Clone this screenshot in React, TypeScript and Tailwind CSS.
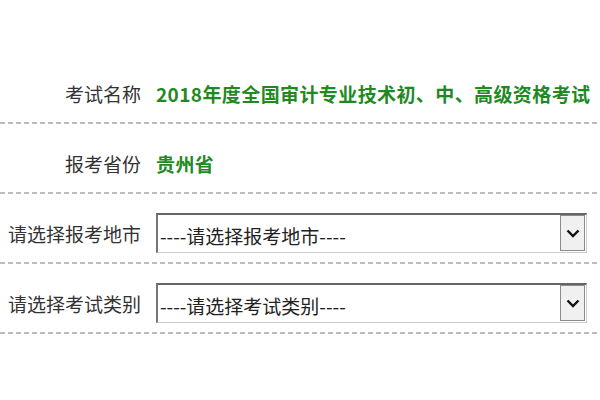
import React from "react";

const font = { fontFamily: '"Noto Sans CJK SC", "Noto Sans", sans-serif' };

function Divider() {
  return (
    <div className="h-[2px] w-[598px] bg-[repeating-linear-gradient(to_right,#bdbdbd_0px,#bdbdbd_5px,transparent_5px,transparent_8px)]" />
  );
}

function Row({ label, children }: { label: string; children: React.ReactNode }) {
  return (
    <div className="flex h-[68px] items-center pt-[10px]">
      <div className="w-[141px] shrink-0 text-right text-[19px] leading-none text-[#333]">{label}</div>
      <div className="ml-[15px] flex items-center">{children}</div>
    </div>
  );
}

function FakeSelect({ text }: { text: string }) {
  return (
    <div className="relative flex h-[40px] w-[431px] items-center border-t-2 border-l-2 border-r border-b border-t-[#666] border-l-[#777] border-r-[#ccc] border-b-[#ccc] bg-white pl-[2px]">
      <span className="pt-[3px] text-[19px] leading-none text-[#222]">{text}</span>
      <div className="absolute right-[1px] top-[0px] flex h-[36px] w-[25px] items-center justify-center border border-[#8a8a8a] bg-[#f0f0f0]">
        <svg width="14" height="9" viewBox="0 0 14 9">
          <path d="M1.5 1.5 L7 7 L12.5 1.5" fill="none" stroke="#111" strokeWidth="2.4" />
        </svg>
      </div>
    </div>
  );
}

export default function App() {
  return (
    <div className="h-[400px] w-[600px] bg-white pt-[54px]" style={font}>
      <Row label="考试名称">
        <span className="text-[19px] font-bold leading-none tracking-[0.4px] text-[#1f8a1f]">2018年度全国审计专业技术初、中、高级资格考试</span>
      </Row>
      <Divider />
      <Row label="报考省份">
        <span className="text-[19px] font-bold leading-none tracking-[0.4px] text-[#1f8a1f]">贵州省</span>
      </Row>
      <Divider />
      <Row label="请选择报考地市">
        <FakeSelect text="----请选择报考地市----" />
      </Row>
      <Divider />
      <Row label="请选择考试类别">
        <FakeSelect text="----请选择考试类别----" />
      </Row>
      <Divider />
    </div>
  );
}
